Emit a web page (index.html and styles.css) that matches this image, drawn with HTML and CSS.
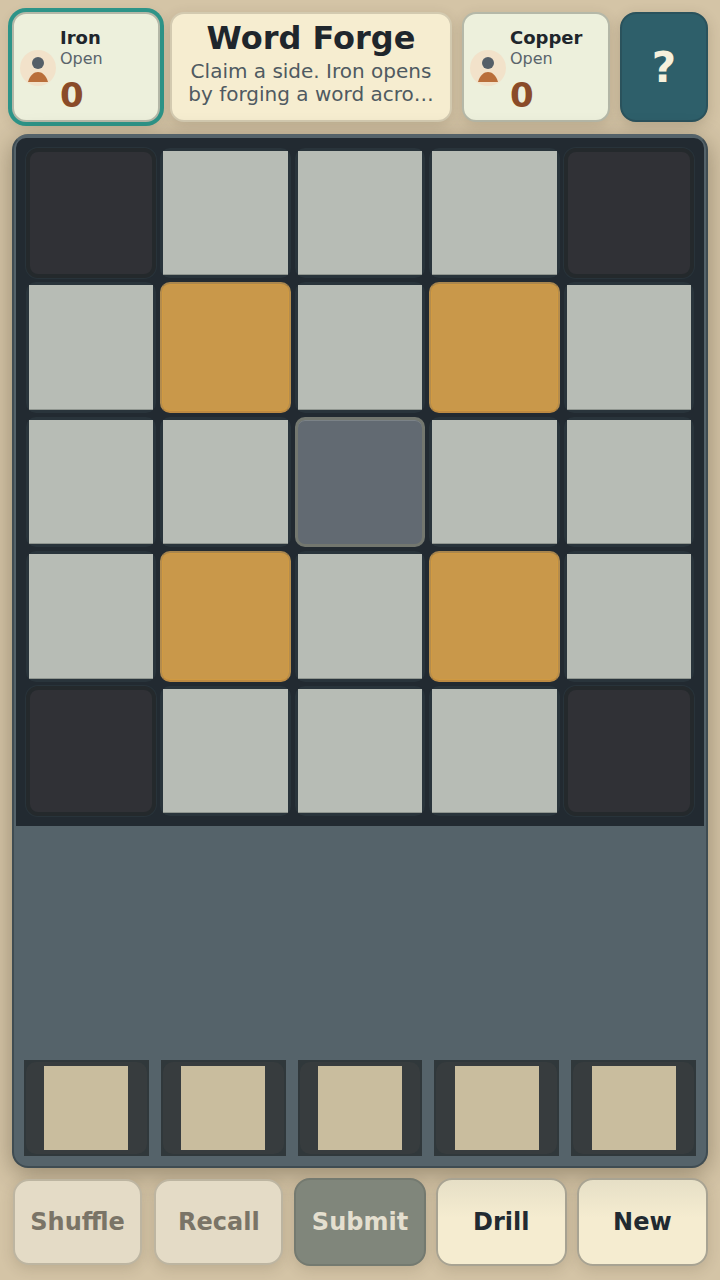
FILE: index.html
```html
<!DOCTYPE html>
<html>
    <head>
        <title>Word Forge</title>
        <link rel="stylesheet" href="styles.css">
    </head>
    <body>
        <div class="top-row">
            <div class="player-card player-active">
                <svg class="avatar" viewBox="0 0 36 36">
                    <circle cx="18" cy="18" r="18" fill="#f2e2ca"/>
                    <circle cx="18" cy="13" r="6" fill="#555f68"/>
                    <path d="M8 32 C10 25 14 22 18 22 C22 22 26 25 28 32 Z" fill="#b96e3a"/>
                </svg>
                <div class="player-info">
                    <div class="player-name">Iron</div>
                    <div class="player-status">Open</div>
                    <div class="player-score">0</div>
                </div>
            </div>

            <div class="title-card">
                <div class="title">Word Forge</div>
                <div class="message">Claim a side. Iron opens by forging a word acro…</div>
            </div>

            <div class="player-card">
                <svg class="avatar" viewBox="0 0 36 36">
                    <circle cx="18" cy="18" r="18" fill="#f2e2ca"/>
                    <circle cx="18" cy="13" r="6" fill="#555f68"/>
                    <path d="M8 32 C10 25 14 22 18 22 C22 22 26 25 28 32 Z" fill="#b96e3a"/>
                </svg>
                <div class="player-info">
                    <div class="player-name">Copper</div>
                    <div class="player-status">Open</div>
                    <div class="player-score">0</div>
                </div>
            </div>

            <button class="help-button">?</button>
        </div>

        <div class="panel">
            <div class="board">
                <div class="cell cell-dark"></div>
                <div class="cell"><div class="tile"></div></div>
                <div class="cell"><div class="tile"></div></div>
                <div class="cell"><div class="tile"></div></div>
                <div class="cell cell-dark"></div>

                <div class="cell"><div class="tile"></div></div>
                <div class="cell cell-bonus"></div>
                <div class="cell"><div class="tile"></div></div>
                <div class="cell cell-bonus"></div>
                <div class="cell"><div class="tile"></div></div>

                <div class="cell"><div class="tile"></div></div>
                <div class="cell"><div class="tile"></div></div>
                <div class="cell cell-center"></div>
                <div class="cell"><div class="tile"></div></div>
                <div class="cell"><div class="tile"></div></div>

                <div class="cell"><div class="tile"></div></div>
                <div class="cell cell-bonus"></div>
                <div class="cell"><div class="tile"></div></div>
                <div class="cell cell-bonus"></div>
                <div class="cell"><div class="tile"></div></div>

                <div class="cell cell-dark"></div>
                <div class="cell"><div class="tile"></div></div>
                <div class="cell"><div class="tile"></div></div>
                <div class="cell"><div class="tile"></div></div>
                <div class="cell cell-dark"></div>
            </div>

            <div class="rack">
                <div class="slot"><div class="slot-well"><div class="slot-tile"></div></div></div>
                <div class="slot"><div class="slot-well"><div class="slot-tile"></div></div></div>
                <div class="slot"><div class="slot-well"><div class="slot-tile"></div></div></div>
                <div class="slot"><div class="slot-well"><div class="slot-tile"></div></div></div>
                <div class="slot"><div class="slot-well"><div class="slot-tile"></div></div></div>
            </div>
        </div>

        <div class="actions">
            <button class="action-button action-off">Shuffle</button>
            <button class="action-button action-off">Recall</button>
            <button class="action-button action-submit">Submit</button>
            <button class="action-button">Drill</button>
            <button class="action-button">New</button>
        </div>
    </body>
</html>
```

FILE: styles.css
```css
* {
    box-sizing: border-box;
}

html, body {
    height: 100%;
}

body {
    margin: 0;
    height: 1280px;
    padding: 12px 12px 14px;
    display: flex;
    flex-direction: column;
    gap: 10px;
    overflow: hidden;
    background: #d4c4a6;
    color: #222a31;
    font-family: "DejaVu Sans", sans-serif;
}

.top-row {
    display: grid;
    grid-template-columns: 148px 1fr 148px 88px;
    gap: 10px;
    height: 110px;
    flex-shrink: 0;
}

.player-card {
    display: flex;
    align-items: center;
    gap: 4px;
    padding: 0 6px;
    background: #edf0dc;
    border: 2px solid #b5b8a8;
    border-radius: 14px;
    box-shadow: 0 4px 14px rgba(60, 50, 30, 0.16);
}

.player-active {
    box-shadow: 0 0 0 4px #2d9488, 0 4px 14px rgba(60, 50, 30, 0.2);
}

.avatar {
    width: 36px;
    height: 36px;
    flex-shrink: 0;
    margin-top: 2px;
}

.player-info {
    display: flex;
    flex-direction: column;
    padding-top: 7px;
}

.player-name {
    font-size: 18px;
    line-height: 21px;
    font-weight: bold;
    color: #1f262c;
}

.player-status {
    margin-top: 1px;
    font-size: 16px;
    line-height: 20px;
    color: #5a646b;
}

.player-score {
    margin-top: 6px;
    font-size: 34px;
    line-height: 40px;
    font-weight: bold;
    color: #8a4b28;
}

.title-card {
    padding: 5px 14px 0;
    text-align: center;
    background: #f6edd0;
    border: 2px solid #d3cab0;
    border-radius: 14px;
    box-shadow: 0 4px 14px rgba(60, 50, 30, 0.16);
}

.title {
    font-size: 32px;
    line-height: 38px;
    font-weight: bold;
    color: #1f262c;
}

.message {
    margin-top: 3px;
    font-size: 20px;
    line-height: 23px;
    color: #4f5a61;
}

.help-button {
    padding: 0;
    font-family: inherit;
    font-size: 42px;
    font-weight: bold;
    color: #f7f1dc;
    background: #2e5f6a;
    border: 2px solid #2a525c;
    border-radius: 16px;
    box-shadow: 0 4px 14px rgba(60, 50, 30, 0.2);
}

.panel {
    flex: 1;
    display: flex;
    flex-direction: column;
    margin-top: 2px;
    padding: 2px;
    background: #55636a;
    border: 2px solid #3f4c52;
    border-top-color: #55636a;
    border-radius: 16px;
    box-shadow: 0 6px 24px rgba(50, 40, 20, 0.38);
}

.board {
    display: grid;
    grid-template-columns: repeat(5, 1fr);
    grid-auto-rows: 130.4px;
    gap: 4px;
    padding: 10px;
    background: #222a31;
    border-radius: 10px 10px 0 0;
}

.cell {
    padding: 3px;
    background: #29343b;
    border-radius: 10px;
}

.tile {
    height: 100%;
    background: #b7bcb5;
    border-bottom: 1px solid #8f958f;
}

.cell-dark {
    background: #303136;
    border: 4px solid #24292c;
    border-radius: 12px;
    box-shadow: 0 0 0 1px #28333a;
}

.cell-bonus {
    background: #c9984a;
    border: 2px solid #b48c4d;
    border-top-color: #a9864e;
    border-bottom-color: #bd8a42;
    border-radius: 10px;
    box-shadow: inset 0 0 0 1px #d09a42;
}

.cell-center {
    background: #626a72;
    border: 3px solid #73776f;
    border-radius: 10px;
    box-shadow: inset 0 1px 0 #7b8287;
}

.rack {
    margin-top: auto;
    display: grid;
    grid-template-columns: repeat(5, 1fr);
    gap: 12px;
    padding: 8px;
}

.slot {
    height: 96px;
    padding: 2px;
    background: #30383b;
}

.slot-well {
    display: flex;
    justify-content: center;
    align-items: center;
    height: 100%;
    background: #373c3e;
    border-radius: 10px;
}

.slot-tile {
    width: 84px;
    height: 84px;
    background: #c9bd9e;
}

.actions {
    display: grid;
    grid-template-columns: repeat(5, 1fr);
    gap: 10px;
    height: 88px;
    flex-shrink: 0;
}

.action-button {
    padding: 0;
    font-family: inherit;
    font-size: 24px;
    font-weight: bold;
    color: #222a31;
    background: linear-gradient(#e6dfc6, #f5ecd0 45%);
    border: 2px solid #a8a392;
    border-radius: 16px;
    box-shadow: 0 4px 14px rgba(60, 50, 30, 0.16);
}

.action-off {
    margin: 1px;
    color: #7a7467;
    background: #e4dbc6;
    border-color: #bdb5a1;
}

.action-submit {
    color: #e4dfcf;
    background: #80867b;
    border-color: #747a70;
}
```
